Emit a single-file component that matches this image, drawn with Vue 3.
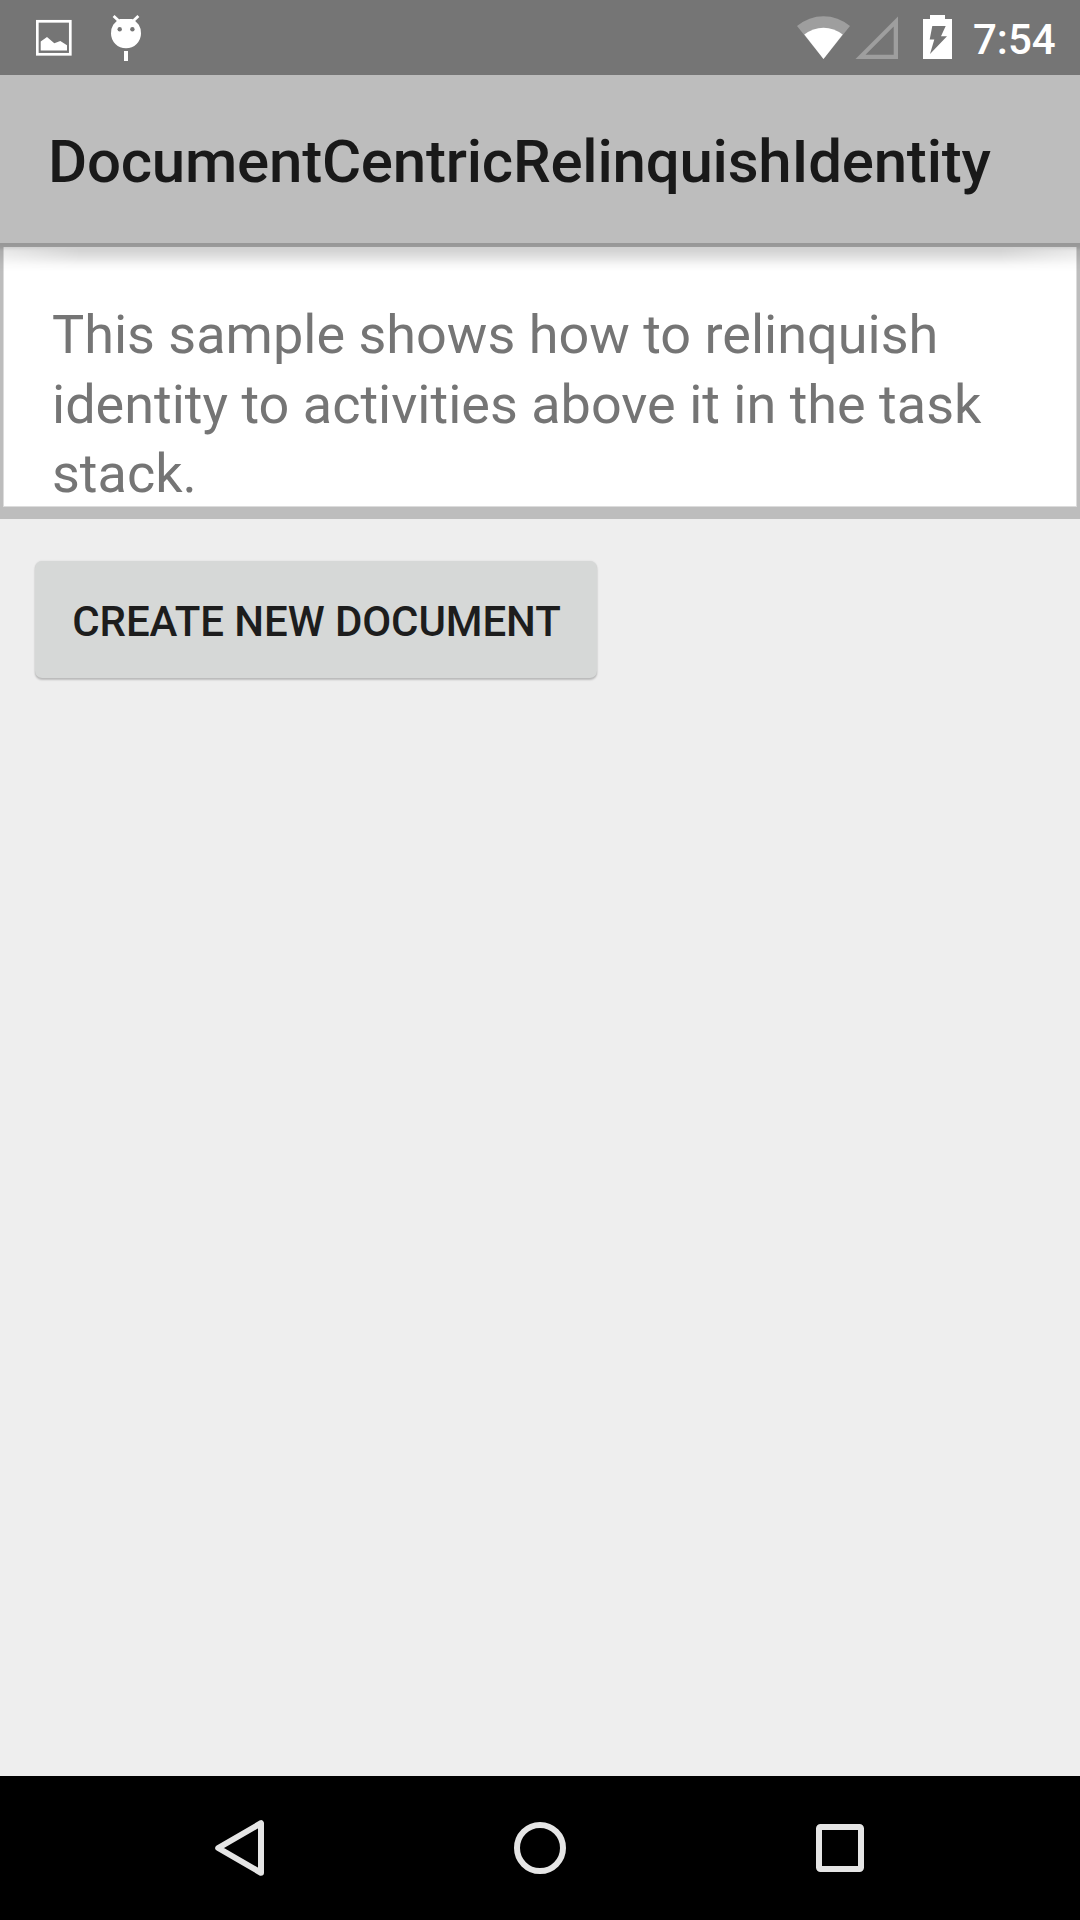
<script setup>
const title = 'DocumentCentricRelinquishIdentity'
const intro = ['This sample shows how to relinquish', 'identity to activities above it in the task', 'stack.']
</script>

<template>
  <div class="screen">
    <header class="status">
      <svg class="picture" width="36" height="75" viewBox="36 0 36 75">
        <rect x="37.3" y="21.3" width="33" height="33" fill="none" stroke="#fff" stroke-width="2.7" />
        <path d="M40.7 50.5V41.5L47 37L54.3 43.3L60.3 41L67 45.3V50.5Z" fill="#fff" />
      </svg>
      <svg class="debug" width="32" height="75" viewBox="110 0 32 75">
        <path d="M120 19H132A15 15 0 0 1 141 33.5A15 14.7 0 0 1 111 33.5A15 15 0 0 1 120 19Z" fill="#fff" />
        <path d="M113.6 16L119.4 21.6M138.4 16L132.6 21.6" stroke="#fff" stroke-width="2.8" />
        <circle cx="119.7" cy="29.2" r="2.2" fill="#757575" />
        <circle cx="132.4" cy="29.2" r="2.2" fill="#757575" />
        <rect x="124" y="51" width="4" height="10" fill="#fff" />
      </svg>
      <span class="spacer"></span>
      <svg width="54" height="75" viewBox="797 0 54 75">
        <path d="M823.5 59L797 26Q809 16.2 823.5 16.2T850 26Z" fill="#9e9e9e" />
        <path d="M823.5 59L804.3 34.6Q813 27.7 823.5 27.7T842.7 34.6Z" fill="#fff" />
      </svg>
      <svg class="signal" width="43" height="75" viewBox="855 0 43 75">
        <path d="M855.5 59H898V16.5ZM865.5 54.7L893.7 26.5V54.7Z" fill="#9e9e9e" fill-rule="evenodd" />
      </svg>
      <svg class="battery" width="29" height="75" viewBox="923 0 29 75">
        <path d="M930 15H945V19H952V59H923V19H930ZM932.3 26L929.7 39.5H934.3L930 54L947 36.3H941L945.7 26Z" fill="#fff" fill-rule="evenodd" />
      </svg>
      <span class="clock">7:54</span>
    </header>

    <div class="appbar">
      <h1>{{ title }}</h1>
    </div>

    <main>
      <section class="intro">
        <p><span v-for="line in intro" :key="line">{{ line }}</span></p>
      </section>
      <button class="create">CREATE NEW DOCUMENT</button>
    </main>

    <nav>
      <svg width="60" height="60" viewBox="0 0 60 60">
        <path d="M51 5.2V54.8L8.2 30Z" />
      </svg>
      <svg width="60" height="60" viewBox="0 0 60 60">
        <circle cx="30" cy="30" r="23" />
      </svg>
      <svg width="60" height="60" viewBox="0 0 60 60">
        <rect x="9" y="9" width="42" height="42" rx="1.5" />
      </svg>
    </nav>
  </div>
</template>

<style>
body {
  margin: 0;
  background: #eee;
}
</style>

<style scoped>
.screen {
  width: 1080px;
  height: 1920px;
  display: flex;
  flex-direction: column;
  overflow: hidden;
  background: #eee;
  font-family: Roboto, "Liberation Sans", sans-serif;
}
svg {
  display: block;
  flex: none;
}
.status {
  flex: none;
  display: flex;
  height: 75px;
  box-sizing: border-box;
  padding: 0 24px 0 36px;
  background: #757575;
}
.debug {
  margin-left: 38px;
}
.spacer {
  flex: 1;
}
.signal {
  margin-left: 4px;
}
.battery {
  margin-left: 25px;
}
.clock {
  width: 83px;
  margin-left: 21px;
  color: #fff;
  font-size: 42px;
  font-weight: 500;
  line-height: 80px;
  white-space: nowrap;
}
.appbar {
  flex: none;
  position: relative;
  display: flex;
  align-items: center;
  height: 168px;
  box-sizing: border-box;
  padding-left: 48px;
  background: #bdbdbd;
}
.appbar::after {
  content: "";
  position: absolute;
  left: 0;
  right: 0;
  top: 100%;
  height: 28px;
  background: linear-gradient(rgba(0, 0, 0, 0.2), rgba(0, 0, 0, 0.17) 28%, rgba(0, 0, 0, 0.11) 52%, rgba(0, 0, 0, 0.03) 78%, transparent);
  mask-image: linear-gradient(90deg, rgba(0, 0, 0, 0.5), #000 80px, #000 1000px, rgba(0, 0, 0, 0.5)), linear-gradient(#000 4px, transparent 8px);
}
h1 {
  margin: 6px 0 0;
  color: #191919;
  font-size: 60px;
  font-weight: 500;
  line-height: 70px;
  letter-spacing: -0.22px;
  white-space: nowrap;
}
main {
  flex: 1;
  min-height: 0;
}
.intro {
  height: 276px;
  box-sizing: border-box;
  padding: 4px 3px 12px;
  background: #bdbdbd;
}
p {
  height: 100%;
  box-sizing: border-box;
  margin: 0;
  padding: 53px 48px 0;
  border: 1px solid #dcdcdc;
  border-top: 0;
  background: #fff;
  color: #757575;
  font-size: 54px;
  line-height: 69.6px;
}
p span {
  display: block;
  white-space: nowrap;
}
.create {
  display: block;
  width: 562px;
  height: 117px;
  margin: 42px 0 0 35px;
  padding: 4px 0 0 1px;
  border: 0;
  border-radius: 7px;
  background: #d6d8d7;
  box-shadow: 0 2px 2px rgba(0, 0, 0, 0.2), 0 0 2px rgba(0, 0, 0, 0.1);
  color: #1d1d1d;
  font-family: inherit;
  font-size: 42px;
  font-weight: 500;
  line-height: 50px;
  letter-spacing: -0.08px;
  white-space: nowrap;
}
nav {
  flex: none;
  display: flex;
  justify-content: center;
  align-items: center;
  gap: 240px;
  height: 144px;
  background: #000;
}
nav path,
nav circle,
nav rect {
  fill: none;
  stroke: #e5e5e5;
  stroke-width: 6;
  stroke-linejoin: round;
}
</style>
